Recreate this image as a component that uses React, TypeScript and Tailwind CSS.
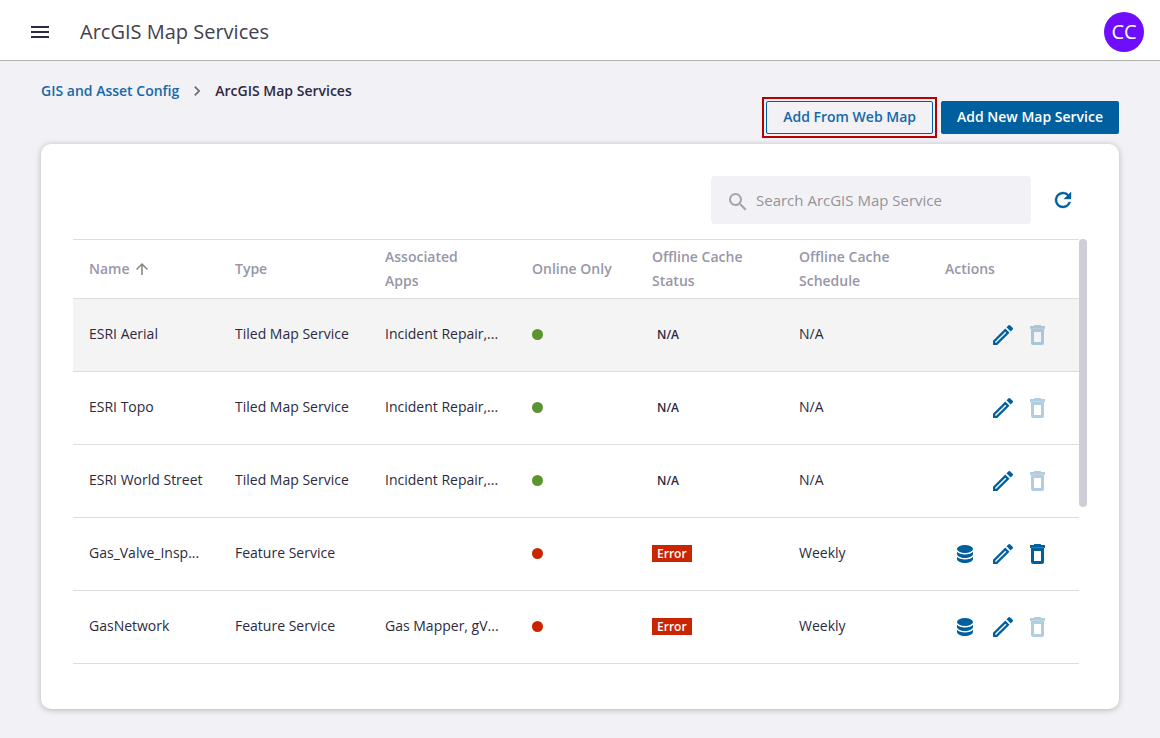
import React from "react";
import { MdArrowUpward, MdChevronRight, MdMenu, MdSearch } from "react-icons/md";

interface MapService {
  name: string;
  type: string;
  apps: string;
  online: boolean;
  status: "N/A" | "Error";
  schedule: string;
  canDelete: boolean;
}

const services: MapService[] = [
  { name: "ESRI Aerial", type: "Tiled Map Service", apps: "Incident Repair,...", online: true, status: "N/A", schedule: "N/A", canDelete: false },
  { name: "ESRI Topo", type: "Tiled Map Service", apps: "Incident Repair,...", online: true, status: "N/A", schedule: "N/A", canDelete: false },
  { name: "ESRI World Street", type: "Tiled Map Service", apps: "Incident Repair,...", online: true, status: "N/A", schedule: "N/A", canDelete: false },
  { name: "Gas_Valve_Insp...", type: "Feature Service", apps: "", online: false, status: "Error", schedule: "Weekly", canDelete: true },
  { name: "GasNetwork", type: "Feature Service", apps: "Gas Mapper, gV...", online: false, status: "Error", schedule: "Weekly", canDelete: false },
];

const DatabaseIcon: React.FC = () => (
  <svg width="16" height="18" viewBox="0 0 16 18" fill="currentColor" aria-hidden="true">
    <ellipse cx="8" cy="4" rx="8" ry="4" />
    <path d="M0 6.8c1.5 1.8 4.5 2.7 8 2.7s6.5-.9 8-2.7V9c0 2.2-3.6 4-8 4s-8-1.8-8-4z" />
    <path d="M0 11.8c1.5 1.8 4.5 2.7 8 2.7s6.5-.9 8-2.7V14c0 2.2-3.6 4-8 4s-8-1.8-8-4z" />
  </svg>
);

const PencilIcon: React.FC = () => (
  <svg width="20" height="20" viewBox="0 0 20 20" fill="currentColor" aria-hidden="true">
    <path
      fillRule="evenodd"
      d="M0 15.8 12.3 3.5l4.2 4.2L4.2 20H0zM2.2 16.8v1h1L13.3 7.7l-1-1z"
    />
    <path d="M13.5 2.3 15.4.4a1.3 1.3 0 0 1 1.8 0l2.4 2.4a1.3 1.3 0 0 1 0 1.8l-1.9 1.9z" />
  </svg>
);

const TrashIcon: React.FC = () => (
  <svg width="15" height="20" viewBox="0 0 15 20" fill="currentColor" aria-hidden="true">
    <path d="M4 1V.5Q4 0 4.5 0h6q.5 0 .5.5V1h4v3H0V1z" />
    <path fillRule="evenodd" d="M1 4h13v14q0 2-2 2H3q-2 0-2-2zM4 7v10h7V7z" />
    <path d="M1 3h13v1H1z" fill="#4f7488" />
  </svg>
);

const RefreshIcon: React.FC = () => (
  <svg
    width="24"
    height="24"
    viewBox="0 0 24 24"
    fill="currentColor"
    stroke="currentColor"
    strokeWidth="0.4"
    aria-hidden="true"
  >
    <path d="M17.65 6.35A7.96 7.96 0 0 0 12 4a8 8 0 1 0 7.73 10h-2.08A6 6 0 1 1 12 6c1.66 0 3.14.69 4.22 1.78L13 11h7V4z" />
  </svg>
);

const Header: React.FC = () => (
  <header className="flex h-[61px] items-center border-b border-[#b0b0b0] bg-white pl-7 pr-4 pt-1">
    <button type="button" aria-label="Open menu" className="text-[#2c2a3f]">
      <MdMenu size={24} />
    </button>
    <h1 className="ml-7 flex-1 text-xl text-[#43414f]">ArcGIS Map Services</h1>
    <button
      type="button"
      aria-label="Account CC"
      className="flex size-10 items-center justify-center rounded-full bg-[#6f0dff] text-xl text-white"
    >
      CC
    </button>
  </header>
);

const Breadcrumb: React.FC = () => (
  <nav aria-label="Breadcrumb" className="flex h-5 items-center text-sm font-semibold">
    <a href="#config" className="text-[#1569a8]">
      GIS and Asset Config
    </a>
    <MdChevronRight size={20} className="mx-2 text-[#6b6b75]" />
    <span aria-current="page" className="text-[#2c2a3f]">
      ArcGIS Map Services
    </span>
  </nav>
);

const ServiceRow: React.FC<{ service: MapService; active: boolean }> = ({ service, active }) => (
  <tr className={`h-[73px] border-b border-[#dedede] ${active ? "bg-[#f4f4f4]" : ""}`}>
    <td className="truncate pb-[2px] pl-4">{service.name}</td>
    <td className="truncate pb-[2px] pl-4">{service.type}</td>
    <td className="truncate pb-[2px] pl-4">{service.apps}</td>
    <td className="pb-[2px] pl-4">
      <span
        role="img"
        aria-label={service.online ? "Yes" : "No"}
        className={`block size-[11px] rounded-full ${service.online ? "bg-[#5c9430]" : "bg-[#c92500]"}`}
      />
    </td>
    <td className="pb-[2px] pl-4">
      <span
        className={`block w-fit px-[5px] text-xs font-semibold leading-[17px] ${
          service.status === "Error" ? "bg-[#c92500] text-white" : ""
        }`}
      >
        {service.status}
      </span>
    </td>
    <td className="pb-[2px] pl-4">{service.schedule}</td>
    <td className="pr-[34px]">
      <div className="flex items-center justify-end text-[#005f9e]">
        {service.status === "Error" && (
          <button type="button" aria-label={`Cache for ${service.name}`} className="mr-5">
            <DatabaseIcon />
          </button>
        )}
        <button type="button" aria-label={`Edit ${service.name}`} className="mr-[17px]">
          <PencilIcon />
        </button>
        <button
          type="button"
          aria-label={`Delete ${service.name}`}
          disabled={!service.canDelete}
          className="disabled:opacity-30"
        >
          <TrashIcon />
        </button>
      </div>
    </td>
  </tr>
);

const ServiceTable: React.FC = () => (
  <table className="w-full table-fixed border-collapse text-left text-sm text-[#2c2a3f]">
    <colgroup>
      <col className="w-[146px]" />
      <col className="w-[150px]" />
      <col className="w-[147px]" />
      <col className="w-[120px]" />
      <col className="w-[147px]" />
      <col className="w-[146px]" />
      <col className="w-[150px]" />
    </colgroup>
    <thead>
      <tr className="h-[59px] border-y border-[#dedede] leading-6 text-[#9797a8] [&>th]:pl-4 [&>th]:font-semibold">
        <th aria-sort="ascending">
          <button type="button" className="flex items-center gap-[3px]">
            Name
            <MdArrowUpward size={18} className="text-[#808080]" />
          </button>
        </th>
        <th>Type</th>
        <th>
          Associated
          <br />
          Apps
        </th>
        <th>Online Only</th>
        <th>
          Offline Cache
          <br />
          Status
        </th>
        <th>
          Offline Cache
          <br />
          Schedule
        </th>
        <th>Actions</th>
      </tr>
    </thead>
    <tbody>
      {services.map((service, index) => (
        <ServiceRow key={service.name} service={service} active={index === 0} />
      ))}
    </tbody>
  </table>
);

const App: React.FC = () => {
  return (
    <div className="min-h-screen bg-[#f2f1f6] font-['Open_Sans',sans-serif]">
      <Header />
      <main className="px-[41px] pb-7 pt-5">
        <Breadcrumb />
        <div className="-mt-1 mb-[6px] flex items-center justify-end gap-1">
          <div className="border-2 border-[#b90000] p-[2px]">
            <button
              type="button"
              className="block rounded-xs border border-[#005f9e] px-4 pb-[2px] text-sm font-semibold leading-[29px] text-[#1569a8]"
            >
              Add From Web Map
            </button>
          </div>
          <button
            type="button"
            className="rounded-xs bg-[#005f9e] px-4 pb-[2px] text-sm font-semibold leading-[31px] text-white"
          >
            Add New Map Service
          </button>
        </div>

        <section
          aria-label="Map services"
          className="rounded-[10px] bg-white px-8 pb-[45px] pt-8 shadow-[0_1px_6px_rgba(0,0,0,0.25)]"
        >
          <div className="mb-[15px] flex items-center justify-end">
            <label className="flex h-12 w-80 items-center gap-[6px] rounded-sm bg-[#f2f1f6] px-[15px]">
              <MdSearch size={24} className="mt-1 shrink-0 text-[#a3a3a8]" />
              <input
                type="text"
                aria-label="Search ArcGIS Map Service"
                placeholder="Search ArcGIS Map Service"
                className="w-full bg-transparent text-[15px] outline-none placeholder:text-[#949499]"
              />
            </label>
            <button type="button" aria-label="Refresh" className="ml-5 mr-3 text-[#005f9e]">
              <RefreshIcon />
            </button>
          </div>
          <div className="flex items-start">
            <div className="min-w-0 flex-1">
              <ServiceTable />
            </div>
            <div aria-hidden="true" className="h-[268px] w-2 rounded-full bg-[#cfced6]" />
          </div>
        </section>
      </main>
    </div>
  );
};

export default App;
